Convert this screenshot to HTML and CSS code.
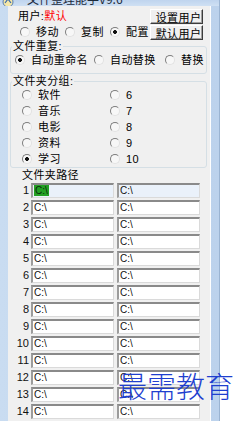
FILE: index.html
```html
<!DOCTYPE html>
<html lang="zh-CN">
<head>
<meta charset="utf-8">
<title>文件整理能手V9.6</title>
<link rel="stylesheet" href="styles.css">
</head>
<body>
<div class="win">
  <div class="titlebar">
    <svg class="appicon" width="12" height="11" viewBox="0 0 12 11"><circle cx="6" cy="4" r="5" fill="#f4e7a8" stroke="#5a7fb0" stroke-width="1"/><path d="M3 5 L6 1 L9 5" fill="none" stroke="#3c6aa8" stroke-width="1.2"/></svg>
    <span class="title">文件整理能手V9.6</span>
  </div>
  <div class="client">
    <div class="top">
      <div class="topleft">
        <div class="userline">用户:<span class="red">默认</span></div>
        <div class="modes">
          <label class="opt w45"><span class="radio"></span>移动</label>
          <label class="opt w45"><span class="radio"></span>复制</label>
          <label class="opt"><span class="radio on"></span>配置</label>
        </div>
      </div>
      <div class="btns">
        <button class="btn">设置用户</button>
        <button class="btn">默认用户</button>
      </div>
    </div>

    <fieldset class="grp">
      <legend>文件重复:</legend>
      <div class="dups">
        <label class="opt w79"><span class="radio on"></span>自动重命名</label>
        <label class="opt w71"><span class="radio"></span>自动替换</label>
        <label class="opt"><span class="radio"></span>替换</label>
      </div>
    </fieldset>

    <fieldset class="grp g2">
      <legend>文件夹分组:</legend>
      <div class="groups">
        <label class="opt"><span class="radio"></span>软件</label>
        <label class="opt"><span class="radio"></span>6</label>
        <label class="opt"><span class="radio"></span>音乐</label>
        <label class="opt"><span class="radio"></span>7</label>
        <label class="opt"><span class="radio"></span>电影</label>
        <label class="opt"><span class="radio"></span>8</label>
        <label class="opt"><span class="radio"></span>资料</label>
        <label class="opt"><span class="radio"></span>9</label>
        <label class="opt"><span class="radio on"></span>学习</label>
        <label class="opt"><span class="radio"></span>10</label>
      </div>
    </fieldset>

    <div class="pathlabel">文件夹路径</div>
    <div class="paths">
      <div class="prow first"><span class="num">1</span><span class="field"><span class="sel">C:\</span></span><span class="field">C:\</span></div>
      <div class="prow"><span class="num">2</span><span class="field">C:\</span><span class="field">C:\</span></div>
      <div class="prow"><span class="num">3</span><span class="field">C:\</span><span class="field">C:\</span></div>
      <div class="prow"><span class="num">4</span><span class="field">C:\</span><span class="field">C:\</span></div>
      <div class="prow"><span class="num">5</span><span class="field">C:\</span><span class="field">C:\</span></div>
      <div class="prow"><span class="num">6</span><span class="field">C:\</span><span class="field">C:\</span></div>
      <div class="prow"><span class="num">7</span><span class="field">C:\</span><span class="field">C:\</span></div>
      <div class="prow"><span class="num">8</span><span class="field">C:\</span><span class="field">C:\</span></div>
      <div class="prow"><span class="num">9</span><span class="field">C:\</span><span class="field">C:\</span></div>
      <div class="prow"><span class="num">10</span><span class="field">C:\</span><span class="field">C:\</span></div>
      <div class="prow"><span class="num">11</span><span class="field">C:\</span><span class="field">C:\</span></div>
      <div class="prow"><span class="num">12</span><span class="field">C:\</span><span class="field">C:\</span></div>
      <div class="prow"><span class="num">13</span><span class="field">C:\</span><span class="field">C:\</span></div>
      <div class="prow"><span class="num">14</span><span class="field">C:\</span><span class="field">C:\</span></div>
    </div>
  </div>
</div>
<div class="watermark">最需教育</div>
</body>
</html>
```
FILE: styles.css
```css
html, body {
  margin: 0;
  padding: 0;
}
body {
  width: 242px;
  height: 421px;
  overflow: hidden;
  background: #ffffff;
  position: relative;
  font: 11px/14px "Liberation Sans", "Noto Sans CJK SC", sans-serif;
  color: #000;
}
.win {
  width: 219px;
  height: 421px;
  background: linear-gradient(to right, #c9dcf1, #bcd2ec);
  border-right: 1px solid #9bb4d2;
  display: flex;
  flex-direction: column;
}
.titlebar {
  height: 12px;
  display: flex;
  align-items: flex-start;
  overflow: hidden;
  background: linear-gradient(to bottom, #bfd4ee, #cfe0f3);
}
.appicon {
  margin: -2px 0 0 2px;
  flex: none;
}
.title {
  margin: -7px 0 0 13px;
  font: 12px/12px "Noto Sans CJK SC", sans-serif;
  color: #1c2a3c;
  white-space: nowrap;
}
.client {
  margin-left: 8px;
  width: 203px;
  flex: 1;
  background: #f0f0f0;
  box-shadow: inset -1px 0 0 #ffffff;
  letter-spacing: 0.4px;
}
.top {
  display: flex;
  padding-top: 3px;
}
.topleft {
  flex: 1;
}
.userline {
  height: 15px;
  line-height: 15px;
  padding-left: 10px;
}
.red {
  color: #ff0000;
}
.modes {
  height: 15px;
  display: flex;
  align-items: center;
  padding-left: 12px;
}
.opt {
  display: flex;
  align-items: center;
  white-space: nowrap;
}
.w45 { width: 45px; }
.w79 { width: 79px; }
.w71 { width: 71px; }
.radio {
  flex: none;
  width: 10px;
  height: 10px;
  box-sizing: border-box;
  border-radius: 50%;
  border: 1px solid;
  border-color: #7d7d7d #e2e2e2 #e2e2e2 #7d7d7d;
  background: #f7f7f7;
  margin-right: 6px;
}
.radio.on {
  background: radial-gradient(circle, #111 0 1.6px, #f7f7f7 2.2px);
}
.btns {
  display: flex;
  flex-direction: column;
  gap: 1px;
  margin-right: 8px;
}
.btn {
  width: 53px;
  height: 15px;
  box-sizing: border-box;
  padding: 0 0 0 4px;
  margin: 0;
  font: 11px/12px "Noto Sans CJK SC", sans-serif;
  letter-spacing: 0.4px;
  color: #000;
  background: #f0f0f0;
  border: 1px solid;
  border-color: #ffffff #3c3c3c #3c3c3c #ffffff;
  box-shadow: inset -1px -1px 0 #a0a0a0;
  text-align: center;
}
.grp {
  margin: 0 0 0 2px;
  width: 197px;
  box-sizing: border-box;
  border: 1px solid #d5dfe5;
  border-radius: 3px;
  padding: 0 0 5px 0;
  min-width: 0;
}
.grp legend {
  padding: 0 1px;
  margin-left: 1px;
  line-height: 12px;
  height: 12px;
}
.g2 {
  margin-top: 1px;
  padding-bottom: 0;
}
.dups {
  display: flex;
  height: 16px;
  align-items: center;
  padding-left: 4px;
}
.groups {
  display: grid;
  grid-template-columns: 88px 1fr;
  grid-auto-rows: 16px;
  padding-left: 11px;
}
.pathlabel {
  height: 14px;
  line-height: 14px;
  padding-left: 14px;
}
.paths {
  padding-top: 1px;
  letter-spacing: 0;
}
.prow {
  display: flex;
  height: 15px;
  margin-bottom: 2px;
}
.num {
  width: 21px;
  margin-right: 2px;
  text-align: right;
  line-height: 15px;
  color: #111;
}
.field {
  width: 83px;
  height: 15px;
  box-sizing: border-box;
  margin-right: 3px;
  border-style: solid;
  border-width: 2px 1px 1px 2px;
  border-color: #8a8a8a #dadada #dadada #9c9c9c;
  background: #ffffff;
  font: 10px/12px "Liberation Sans", sans-serif;
  padding-left: 1px;
  color: #111;
}
.first .field {
  background: #eaf1fa;
}
.sel {
  background: #23a023;
  color: #0a2a0a;
  padding: 0 1px;
}
.watermark {
  position: absolute;
  left: 118px;
  top: 368px;
  font: 29px/34px "Noto Sans CJK SC", sans-serif;
  font-weight: 300;
  color: #1f3fcf;
  white-space: nowrap;
}
```
